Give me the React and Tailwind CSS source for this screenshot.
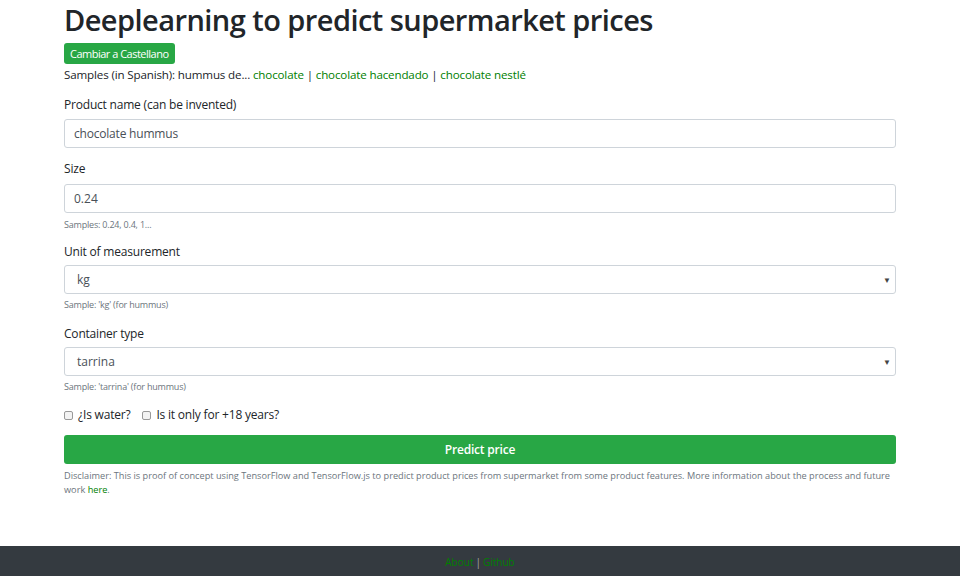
export default function App() {
  const font = { fontFamily: '"Open Sans", "Noto Sans", sans-serif' };
  return (
    <div className="min-h-[576px] flex flex-col bg-white text-[#212529]" style={font}>
      <div className="w-[832px] mx-auto flex-1">
        <h1 className="text-[29px] leading-[38px] font-semibold tracking-[-0.55px] mt-[1px]">Deeplearning to predict supermarket prices</h1>
        <button className="mt-[4px] h-[21px] px-[6px] bg-[#28a745] text-white text-[11px] tracking-[-0.5px] rounded-[3px] leading-[21px]">Cambiar a Castellano</button>
        <div className="text-[11.6px] leading-[18px] mt-[2px] tracking-[-0.15px]">
          Samples (in Spanish): hummus de... <a className="text-[#008000]">chocolate</a> | <a className="text-[#008000]">chocolate hacendado</a> | <a className="text-[#008000]">chocolate nestlé</a>
        </div>
        <div className="text-[12px] leading-[16px] mt-[13px] tracking-[-0.2px]">Product name (can be invented)</div>
        <div className="mt-[6px] h-[29px] border border-[#ced4da] rounded-[3px] px-[9px] flex items-center text-[12px] text-[#495057] tracking-[-0.2px]">chocolate hummus</div>
        <div className="text-[12px] leading-[16px] mt-[13px] tracking-[-0.2px]">Size</div>
        <div className="mt-[7px] h-[29px] border border-[#ced4da] rounded-[3px] px-[9px] flex items-center text-[12px] text-[#495057]">0.24</div>
        <div className="text-[9px] leading-[12px] mt-[6px] text-[#6c757d] tracking-[-0.2px]">Samples: 0.24, 0.4, 1...</div>
        <div className="text-[12px] leading-[16px] mt-[13px] tracking-[-0.2px]">Unit of measurement</div>
        <div className="mt-[5px] h-[29px] border border-[#ced4da] rounded-[3px] pl-[12px] pr-[4px] flex items-center justify-between text-[12px] text-[#495057]">
          <span>kg</span>
          <span className="text-[8px] text-[#444]">▼</span>
        </div>
        <div className="text-[9px] leading-[12px] mt-[5px] text-[#6c757d] tracking-[-0.2px]">Sample: 'kg' (for hummus)</div>
        <div className="text-[12px] leading-[16px] mt-[15px] tracking-[-0.2px]">Container type</div>
        <div className="mt-[5px] h-[29px] border border-[#ced4da] rounded-[3px] pl-[12px] pr-[4px] flex items-center justify-between text-[12px] text-[#495057]">
          <span>tarrina</span>
          <span className="text-[8px] text-[#444]">▼</span>
        </div>
        <div className="text-[9px] leading-[12px] mt-[5px] text-[#6c757d] tracking-[-0.2px]">Sample: 'tarrina' (for hummus)</div>
        <div className="mt-[14px] flex items-center text-[12px] leading-[16px] tracking-[-0.2px]">
          <span className="w-[9px] h-[9px] border border-[#999] rounded-[2px] bg-[#f3f3f3] mr-[5px]"></span>
          <span>¿Is water?</span>
          <span className="w-[9px] h-[9px] border border-[#999] rounded-[2px] bg-[#f3f3f3] ml-[12px] mr-[5px]"></span>
          <span>Is it only for +18 years?</span>
        </div>
        <button className="mt-[12px] w-full h-[29px] bg-[#28a745] text-white text-[12px] font-semibold rounded-[3px] tracking-[-0.2px]">Predict price</button>
        <p className="mt-[5px] text-[9.2px] leading-[14px] text-[#6c757d]">
          Disclaimer: This is proof of concept using TensorFlow and TensorFlow.js to predict product prices from supermarket from some product features. More information about the process and future work <a className="text-[#008000]">here</a>.
        </p>
      </div>
      <div className="h-[30px] bg-[#343a40] flex items-center justify-center text-[10px] text-[#aaa] pt-[3px]">
        <a className="text-[#008000]">About</a><span className="mx-[2px]">|</span><a className="text-[#008000]">Github</a>
      </div>
    </div>
  );
}
